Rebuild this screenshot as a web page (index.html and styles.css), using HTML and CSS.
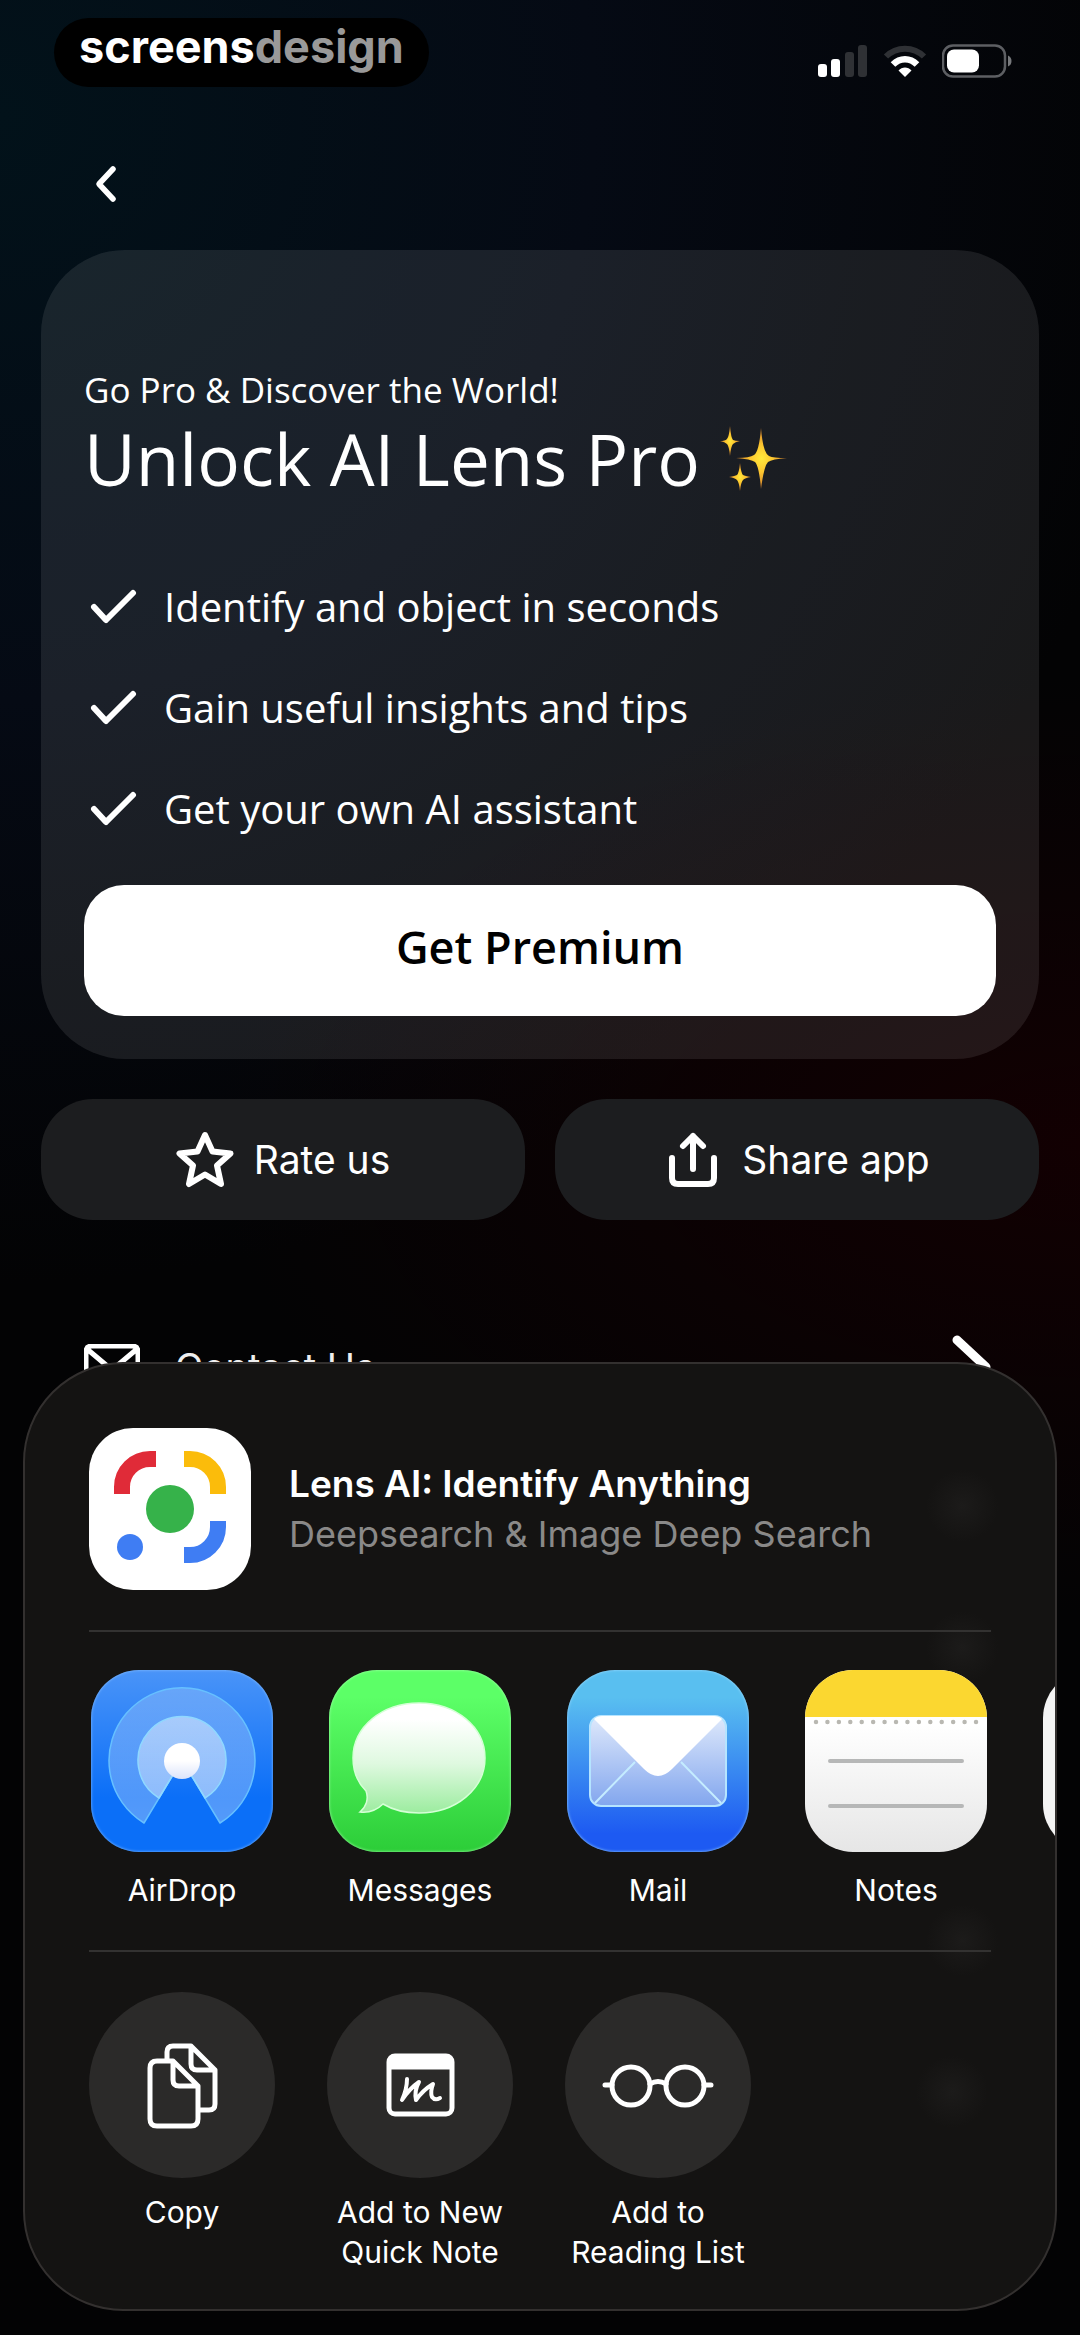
FILE: index.html
```html
<!DOCTYPE html>
<html lang="en">
<head>
    <meta charset="UTF-8">
    <meta name="viewport" content="width=device-width, initial-scale=1.0">
    <title>AI Lens Pro</title>
    <link rel="stylesheet" href="styles.css">
</head>
<body>
    <div class="screen">
        <header class="status-bar">
            <div class="brand">screens<span>design</span></div>
            <div class="status-icons">
                <svg width="50" height="34" viewBox="0 0 50 34" aria-hidden="true">
                    <rect x="0" y="20" width="9" height="13" rx="3" fill="#fff"/>
                    <rect x="13" y="15" width="9" height="18" rx="3" fill="#fff"/>
                    <rect x="27" y="8" width="9" height="25" rx="3" fill="#2f3135"/>
                    <rect x="40" y="1" width="9" height="32" rx="3" fill="#2f3135"/>
                </svg>
                <svg width="44" height="34" viewBox="0 0 44 34" aria-hidden="true">
                    <path d="M3 12.500C13.500 2 30.500 2 41 12.500" fill="none" stroke="#2f3135" stroke-width="6"/>
                    <path d="M10 20.500C17 13.500 27 13.500 34 20.500" fill="none" stroke="#fff" stroke-width="6.500"/>
                    <path d="M15.500 26.500C19 22.500 25 22.500 28.500 26.500L22 33Z" fill="#fff"/>
                </svg>
                <svg width="70" height="34" viewBox="0 0 70 34" aria-hidden="true">
                    <rect x="1" y="1.500" width="62" height="31" rx="10" fill="none" stroke="#5d5f63" stroke-width="2.500"/>
                    <rect x="5" y="5.500" width="32" height="23" rx="7" fill="#fff"/>
                    <path d="M66 11.500Q69.500 13 69.500 17T66 22.500Z" fill="#77797c"/>
                </svg>
            </div>
        </header>

        <nav class="top-nav">
            <button class="back" aria-label="Back">
                <svg width="24" height="38" viewBox="0 0 24 38"><path d="M19 4L5 19L19 34" fill="none" stroke="#fff" stroke-width="5.500" stroke-linecap="round" stroke-linejoin="round"/></svg>
            </button>
        </nav>

        <main class="content">
            <section class="pro-card">
                <p class="pro-sub">Go Pro &amp; Discover the World!</p>
                <h1 class="pro-title">Unlock AI Lens Pro
                    <svg class="sparkles" width="68" height="66" viewBox="0 0 68 66" aria-hidden="true">
                        <defs>
                            <radialGradient id="spark"><stop offset="0" stop-color="#ffe93b"/><stop offset="0.450" stop-color="#fcc52f"/><stop offset="1" stop-color="#d07c2c"/></radialGradient>
                        </defs>
                        <g fill="url(#spark)">
                            <path d="M41 2Q43 27 49 30Q53 32 67 32Q52 33 48 36Q44 40 41 63Q39 40 35 36Q31 33 16 32Q30 32 34 29Q39 26 41 2Z"/>
                            <path d="M10 0Q11 12 13 14Q15 15 20 15Q15 16 13 18Q11 20 10 30Q9 20 7 18Q5 16 0 15Q5 15 7 13Q9 11 10 0Z"/>
                            <path d="M20 37Q21 47 23 49Q25 50 31 51Q25 52 23 54Q21 56 20 65Q19 56 17 54Q15 52 9 51Q15 50 17 49Q19 47 20 37Z"/>
                        </g>
                    </svg>
                </h1>
                <ul class="features">
                    <li><svg width="48" height="36" viewBox="0 0 48 36" aria-hidden="true"><path d="M4 18L16 31L43 4"/></svg>Identify and object in seconds</li>
                    <li><svg width="48" height="36" viewBox="0 0 48 36" aria-hidden="true"><path d="M4 18L16 31L43 4"/></svg>Gain useful insights and tips</li>
                    <li><svg width="48" height="36" viewBox="0 0 48 36" aria-hidden="true"><path d="M4 18L16 31L43 4"/></svg>Get your own AI assistant</li>
                </ul>
                <button class="premium">Get Premium</button>
            </section>

            <div class="actions">
                <button class="action">
                    <svg width="58" height="58" viewBox="0 0 58 58" aria-hidden="true"><path d="M29 4L36.500 20.500L54.500 22.500L41 34.500L45 53L29 43.500L13 53L17 34.500L3.500 22.500L21.500 20.500Z" stroke-width="6"/></svg>
                    Rate us
                </button>
                <button class="action">
                    <svg width="58" height="58" viewBox="0 0 58 58" aria-hidden="true"><path d="M8 27V47Q8 53 14 53H44Q50 53 50 47V27M29 38V5M19 15L29 5L39 15" stroke-width="6"/></svg>
                    Share app
                </button>
            </div>

            <a class="contact" href="#contact">
                <svg width="56" height="46" viewBox="0 0 56 46" aria-hidden="true"><path d="M8 2H48Q54 2 54 8V38Q54 44 48 44H8Q2 44 2 38V8Q2 2 8 2ZM3 5L28 26L53 5" stroke-width="5"/></svg>
                <span>Contact Us</span>
                <svg width="44" height="64" viewBox="0 0 44 64" aria-hidden="true"><path d="M5 5L34 32L5 59" stroke-width="9"/></svg>
            </a>
        </main>

        <section class="sheet" aria-label="Share">
            <div class="sheet-head">
                <svg class="app-logo" width="162" height="162" viewBox="0 0 162 162" aria-hidden="true">
                    <g fill="none" stroke-width="16">
                        <path d="M33 66V59A28 28 0 0 1 61 31H67" stroke="#e02b38"/>
                        <path d="M95 31H101A28 28 0 0 1 129 59V66" stroke="#fbbc0b"/>
                        <path d="M129 93V99A28 28 0 0 1 101 127H95" stroke="#3f7df3"/>
                    </g>
                    <circle cx="81" cy="81" r="24" fill="#36b24a"/>
                    <circle cx="41" cy="119" r="13" fill="#3f7df3"/>
                </svg>
                <div>
                    <h2>Lens AI: Identify Anything</h2>
                    <p>Deepsearch &amp; Image Deep Search</p>
                </div>
            </div>

            <hr>

            <div class="share-row apps">
                <button>
                    <svg class="airdrop" width="182" height="182" viewBox="0 0 182 182" aria-hidden="true">
                        <defs>
                            <linearGradient id="ring1" x2="0" y2="1"><stop offset="0" stop-color="#fff" stop-opacity="0.200"/><stop offset="1" stop-color="#fff" stop-opacity="0.300"/></linearGradient>
                            <linearGradient id="ring2" x2="0" y2="1"><stop offset="0" stop-color="#fff" stop-opacity="0.450"/><stop offset="1" stop-color="#fff" stop-opacity="0.350"/></linearGradient>
                            <linearGradient id="dot" x2="0" y2="1"><stop offset="0.500" stop-color="#fff"/><stop offset="1" stop-color="#dbe4fb"/></linearGradient>
                        </defs>
                        <path d="M53 153L91 90L129 153A73 73 0 1 0 53 153Z" fill="url(#ring1)" stroke="#66c0ff" stroke-width="1.500" stroke-linejoin="round"/>
                        <path d="M68 128L91 90L114 128A44 44 0 1 0 68 128Z" fill="url(#ring2)" stroke="#8fd8ff" stroke-width="1.500"/>
                        <circle cx="91" cy="91" r="18" fill="url(#dot)"/>
                    </svg>
                    <span>AirDrop</span>
                </button>
                <button>
                    <svg class="messages" width="182" height="182" viewBox="0 0 182 182" aria-hidden="true">
                        <defs>
                            <linearGradient id="bubble" x2="0" y2="1"><stop offset="0.150" stop-color="#fff"/><stop offset="0.550" stop-color="#dff9e0"/><stop offset="1" stop-color="#9cec9f"/></linearGradient>
                        </defs>
                        <path d="M90 33C127 33 156 57 156 88S127 143 90 143C77 143 64 140 54 134C48 140 40 143 31 142C37 137 40 129 37 121C28 112 24 101 24 88C24 57 53 33 90 33Z" fill="url(#bubble)" stroke="#d5ffd6" stroke-width="1.500"/>
                    </svg>
                    <span>Messages</span>
                </button>
                <button>
                    <svg class="mail" width="182" height="182" viewBox="0 0 182 182" aria-hidden="true">
                        <defs>
                            <linearGradient id="env" x2="0" y2="1"><stop offset="0" stop-color="#dfe9fb"/><stop offset="1" stop-color="#82a6ee"/></linearGradient>
                        </defs>
                        <rect x="23" y="46" width="136" height="90" rx="11" fill="url(#env)" stroke="#b5e4ff" stroke-width="2"/>
                        <path d="M28 133L68 92M154 133L114 92" stroke="#c4ecff" stroke-width="2"/>
                        <path d="M27 49Q30 46 35 46H147Q152 46 155 49L105 99Q91 113 77 99Z" fill="#fff"/>
                    </svg>
                    <span>Mail</span>
                </button>
                <button>
                    <svg class="notes" width="182" height="182" viewBox="0 0 182 182" aria-hidden="true">
                        <rect width="182" height="47" fill="#fbd730"/>
                        <path d="M11 52H172" stroke="#b9b8b2" stroke-width="4.500" stroke-linecap="round" stroke-dasharray="0 11.430"/>
                        <path d="M25 91H157M25 136H157" stroke="#b6b7b7" stroke-width="4" stroke-linecap="round"/>
                    </svg>
                    <span>Notes</span>
                </button>
                <button aria-label="More apps">
                    <svg class="blank" width="182" height="182" viewBox="0 0 182 182" aria-hidden="true"></svg>
                </button>
            </div>

            <hr>

            <div class="share-row tools">
                <button>
                    <svg width="186" height="186" viewBox="0 0 186 186" aria-hidden="true">
                        <path d="M78 67V60Q78 54 84 54H102L126 78V112Q126 118 120 118H110M102 54V72Q102 78 108 78H126"/>
                        <path d="M68 69H84L109 94V127Q109 134 102 134H68Q61 134 61 127V76Q61 69 68 69ZM84 69V88Q84 94 90 94H109"/>
                    </svg>
                    <span>Copy</span>
                </button>
                <button>
                    <svg width="186" height="186" viewBox="0 0 186 186" aria-hidden="true">
                        <rect x="62" y="64" width="63" height="58" rx="6"/>
                        <path d="M64 66H123V75H64Z" fill="#fff"/>
                        <path d="M80 87Q80 97 75 108Q82 97 92 90Q87 99 89 108Q96 98 106 92Q103 100 105 105Q108 109 113 106" stroke-width="4"/>
                    </svg>
                    <span>Add to New Quick Note</span>
                </button>
                <button>
                    <svg width="186" height="186" viewBox="0 0 186 186" aria-hidden="true">
                        <circle cx="66" cy="94" r="19"/>
                        <circle cx="120" cy="94" r="19"/>
                        <path d="M85 92Q93 87 101 92M40 93H47M139 93H146"/>
                    </svg>
                    <span>Add to<br>Reading List</span>
                </button>
            </div>
        </section>
    </div>
</body>
</html>
```

FILE: styles.css
```css
* {
    box-sizing: border-box;
}

body {
    margin: 0;
    background-color: #000;
    color: #fff;
    font-family: Inter, Roboto, sans-serif;
}

h1, h2, p, ul {
    margin: 0;
    padding: 0;
    font-weight: 400;
}

button {
    border: none;
    padding: 0;
    background: none;
    color: inherit;
    font-family: inherit;
    cursor: pointer;
}

svg {
    display: block;
    flex-shrink: 0;
}

.screen {
    position: relative;
    min-height: 100vh;
    overflow: hidden;
    background:
        radial-gradient(ellipse 80% 20% at 100% 49%, #120002, transparent),
        radial-gradient(ellipse 110% 50% at 0 5%, #02121a, #050a14 50%, transparent),
        #030304;
}

.status-bar {
    display: flex;
    justify-content: space-between;
    padding: 18px 68px 0 54px;
}

.brand {
    height: 69px;
    padding: 0 25px 12px;
    border-radius: 35px;
    background-color: #000;
    font-size: 45px;
    line-height: 57px;
    font-weight: 700;
}

.brand span {
    color: #999;
}

.status-icons {
    display: flex;
    gap: 15px;
    padding-top: 26px;
}

.top-nav {
    padding: 78px 94px 43px;
}

.content {
    padding: 0 41px;
}

.pro-card {
    padding: 115px 43px 43px;
    border-radius: 84px;
    background-color: rgba(255, 255, 255, 0.09);
    font-family: "Open Sans", "Noto Sans", sans-serif;
}

.pro-sub {
    font-size: 35px;
    line-height: 50px;
}

.pro-title {
    display: flex;
    align-items: center;
    gap: 20px;
    font-size: 71px;
    line-height: 88px;
}

.features {
    display: flex;
    flex-direction: column;
    gap: 41px;
    margin-top: 74px;
    list-style: none;
}

.features li {
    display: flex;
    align-items: center;
    gap: 26px;
    padding-left: 6px;
    font-size: 40px;
    line-height: 60px;
}

.features path {
    fill: none;
    stroke: #fff;
    stroke-width: 6;
    stroke-linecap: round;
    stroke-linejoin: round;
}

.premium {
    width: 100%;
    height: 131px;
    margin-top: 46px;
    padding-bottom: 9px;
    border-radius: 40px;
    background-color: #fff;
    color: #000;
    font-size: 45px;
    font-weight: 600;
}

.actions {
    display: grid;
    grid-template-columns: 1fr 1fr;
    gap: 30px;
    margin-top: 40px;
}

.action {
    display: flex;
    justify-content: center;
    align-items: center;
    gap: 20px;
    height: 121px;
    border-radius: 52px;
    background-color: #1c1d1f;
    font-size: 39px;
}

.action path,
.contact path {
    fill: none;
    stroke: #fff;
    stroke-linecap: round;
    stroke-linejoin: round;
}

.contact {
    display: flex;
    align-items: center;
    gap: 35px;
    margin-top: 115px;
    padding: 0 43px;
    color: #eee;
    font-size: 38px;
    text-decoration: none;
}

.contact span {
    flex: 1;
}

/* share sheet lies over the settings list */
.sheet {
    position: absolute;
    right: 23px;
    bottom: 24px;
    left: 23px;
    overflow: hidden;
    padding: 64px 0 37px 64px;
    border: 2px solid #33302f;
    border-radius: 100px;
    background:
        radial-gradient(circle 36px at 91% 15%, #1c1b1a, transparent),
        radial-gradient(circle 36px at 91% 30%, #1c1b1a, transparent),
        radial-gradient(circle 36px at 91% 61%, #1c1b1a, transparent),
        radial-gradient(circle 36px at 90% 77%, #1c1b1a, transparent),
        #141312;
}

.sheet-head {
    display: flex;
    align-items: center;
    gap: 38px;
}

.app-logo {
    border-radius: 44px;
    background-color: #fff;
}

.sheet h2,
.sheet p {
    font-size: 36px;
    line-height: 51px;
}

.sheet h2 {
    font-size: 37px;
    font-weight: 600;
}

.sheet p {
    color: #8a8988;
}

.sheet hr {
    height: 2px;
    margin: 40px 64px 38px 0;
    border: none;
    background-color: #333231;
}

.share-row {
    display: flex;
    gap: 52px;
}

.share-row button {
    display: flex;
    flex-direction: column;
    align-items: center;
    flex: 0 0 186px;
    font-size: 30px;
    line-height: 40px;
}

.apps svg {
    margin-bottom: 18px;
    border-radius: 48px;
}

.airdrop {
    background: linear-gradient(#4a94f8, #0b6ff8 70%);
    box-shadow: inset 0 0 3px #8fc4ff;
}

.messages {
    background: linear-gradient(#5cff67 15%, #2ccd38);
    box-shadow: inset 0 0 3px #a9ffb0;
}

.mail {
    background: linear-gradient(#59bff0 15%, #1d5af2 90%);
    box-shadow: inset 0 0 3px #a3dcff;
}

.notes {
    background: linear-gradient(#fff 30%, #e6e6e6);
}

.blank {
    background-color: #f4f4f4;
}

.tools {
    padding-top: 2px;
}

.tools svg {
    margin-bottom: 14px;
    border-radius: 50%;
    background-color: #2b2a29;
    fill: none;
    stroke: #fff;
    stroke-width: 5;
    stroke-linecap: round;
    stroke-linejoin: round;
}
```
